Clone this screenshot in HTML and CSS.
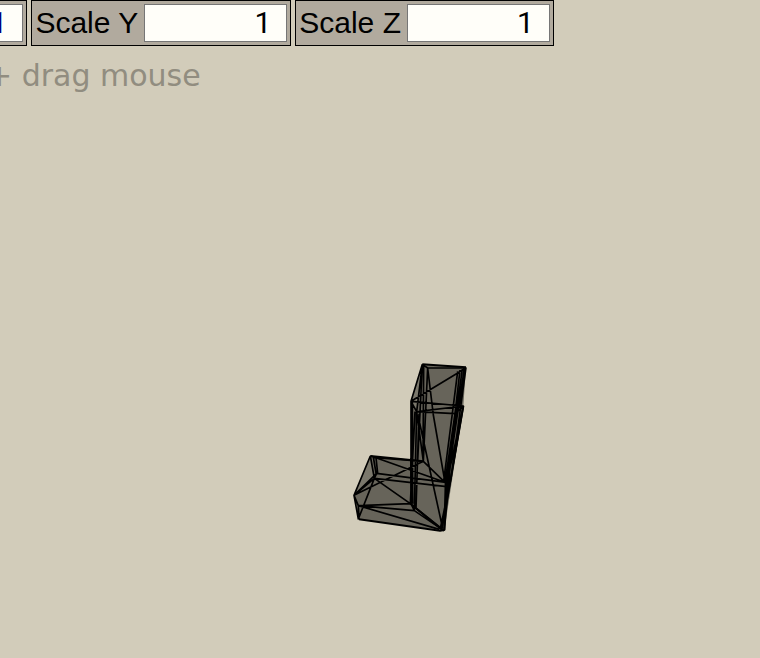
FILE: index.html
```
<!DOCTYPE html>
<html lang="en">
<head>
<meta charset="utf-8">
<title>Scale controls</title>
<link rel="stylesheet" href="styles.css">
</head>
<body>
<svg class="scene" role="img" aria-label="Wireframe solid">
  <g transform="translate(345 355) scale(.333333)">
    <path class="faces" d="M232 28L363 37L355 153L298 527L42 493L27 421L76 303L198 315L198 139Z"/>
    <path class="side" d="M232 28L198 139L215 170ZM76 303L27 421L88 370Z"/>
    <path class="edges" d="M232 28L248 39L363 39L198 139M248 39L235 319L300 382L363 37M232 28L198 139L198 446L208 467L215 170L330 176L355 153L198 139L215 170L355 153
      M232 28L215 170M232 28L218 318M236 30L234 319
      M248 39L265 180L300 382M345 45L330 176L300 382M352 42L303 395L355 153M358 39L305 395L298 527M338 49L322 176L296 378
      M363 37L318 370L286 520M355 153L290 527M330 176L298 527M202 139L203 446M210 170L196 446M222 176L213 460
      M215 170L235 319M222 195L293 520M76 303L93 308L235 319L27 421L95 355L303 382M76 303L88 370L305 395
      M93 308L98 355M85 306L94 360M80 304L300 382M95 355L88 370L27 421M40 452L196 446L298 527M208 467L40 452L27 421
      M88 370L196 446L290 523M76 303L27 421L40 492L88 370M40 452L283 523M40 452L42 493
      M208 467L283 518L298 527"/>
    <path class="outline" d="M232 28L363 37M42 493L285 527L298 525M76 303L235 319M196 446L290 523M302 380L298 525M355 153L302 460M198 310L200 446"/>
  </g>
</svg>
<form class="toolbar">
  <div class="field"><label for="sx">Scale X</label><input class="active" id="sx" type="number" value="1"></div>
  <div class="field"><label for="sy">Scale Y</label><input id="sy" type="number" value="1"></div>
  <div class="field"><label for="sz">Scale Z</label><input id="sz" type="number" value="1"></div>
</form>
<p class="hint">+ drag mouse</p>
</body>
</html>
```
FILE: styles.css
```
* { box-sizing: border-box; }
html, body { min-height: 100%; }
body {
  margin: 0;
  overflow: hidden;
  background: #d2ccba;
  color: #000;
  font: 30px "Liberation Sans", Arial, sans-serif;
}
.scene {
  position: absolute;
  inset: 0;
  width: 100%;
  height: 100%;
  z-index: -1;
}
.faces { fill: #67645a; }
.side { fill: #7b786c; }
.edges, .outline { fill: none; stroke: #000; stroke-width: 5; stroke-linejoin: round; }
.outline { stroke-width: 6; }
.toolbar { display: flex; gap: 4px; margin-left: -233px; }
.field {
  display: flex;
  flex: none;
  align-items: center;
  gap: 6px;
  height: 46px;
  padding: 3px;
  border: 1px solid #000;
  background: #b1aa9e;
}
.field input {
  width: 143px;
  height: 38px;
  margin: 0;
  padding: 0 0 2px;
  border: 1px solid #767676;
  border-radius: 0;
  background: #fffef9;
  color: #000;
  font: 30px Roboto, sans-serif;
  text-align: right;
}
.field .active { color: #000080; }
.hint {
  margin: 12px 0 0 -13px;
  color: #918d80;
  font: 30px/36px "DejaVu Sans", sans-serif;
}
```
